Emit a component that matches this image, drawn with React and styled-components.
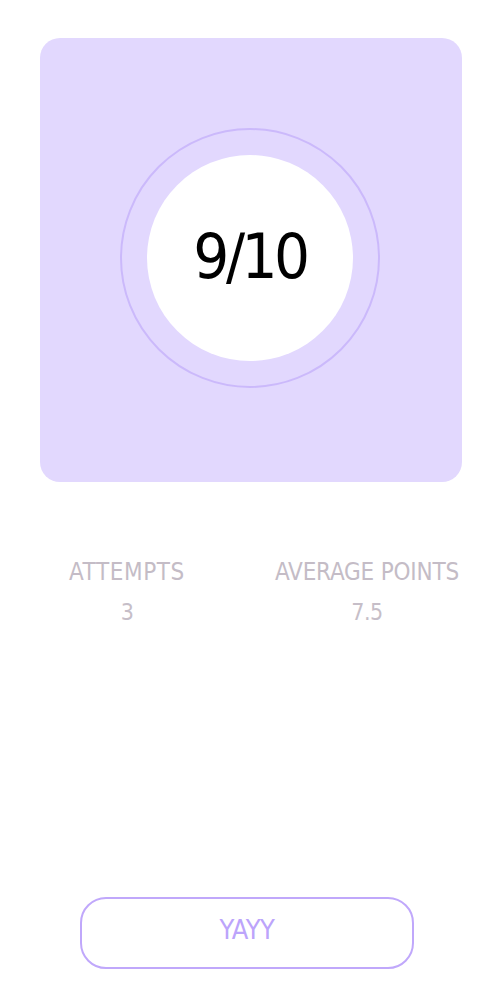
import styled, { createGlobalStyle } from "styled-components";

const GlobalStyle = createGlobalStyle`
  body {
    margin: 0;
    background: #fff;
    font-family: "DejaVu Sans Condensed", "Roboto Condensed", "Roboto", sans-serif;
  }
`;

const Page = styled.div`
  width: 504px;
  min-height: 998px;
  padding: 38px 40px 0;
  box-sizing: border-box;
`;

const Card = styled.div`
  width: 422px;
  height: 444px;
  border-radius: 20px;
  background: #e2d8fe;
  display: flex;
  align-items: center;
  justify-content: center;
`;

const Ring = styled.div`
  width: 260px;
  height: 260px;
  margin: -4px 0 0 -2px;
  border-radius: 50%;
  border: 2px solid #cbb9fb;
  box-sizing: border-box;
  display: flex;
  align-items: center;
  justify-content: center;
`;

const Score = styled.div`
  width: 206px;
  height: 206px;
  padding-bottom: 4px;
  box-sizing: border-box;
  border-radius: 50%;
  background: #fff;
  display: flex;
  align-items: center;
  justify-content: center;
  font-size: 63px;
  letter-spacing: -3.5px;
  color: #000;
`;

const Stats = styled.div`
  display: grid;
  grid-template-columns: 240px 240px;
  margin: 76px 0 0 -33px;
`;

const Stat = styled.div`
  display: flex;
  flex-direction: column;
  align-items: center;
`;

const Label = styled.div`
  font-size: 24px;
  line-height: 28px;
  letter-spacing: ${(props) => (props.tight ? "-0.2px" : "0.6px")};
  color: #c4bcc6;
`;

const Value = styled.div`
  margin-top: 12px;
  font-size: 23px;
  line-height: 28px;
  letter-spacing: -0.5px;
  color: #c6bec8;
`;

const Button = styled.button`
  display: block;
  margin: 271px 0 0 40px;
  width: 334px;
  height: 72px;
  padding: 0 0 8px;
  border: 2px solid #c0a8fb;
  border-radius: 26px;
  background: #fff;
  color: #bca4fb;
  font-family: inherit;
  font-size: 27px;
  letter-spacing: -0.5px;
  cursor: pointer;
`;

export default function App() {
  return (
    <>
      <GlobalStyle />
      <Page>
        <Card>
          <Ring>
            <Score>9/10</Score>
          </Ring>
        </Card>
        <Stats>
          <Stat>
            <Label>ATTEMPTS</Label>
            <Value>3</Value>
          </Stat>
          <Stat>
            <Label tight>AVERAGE POINTS</Label>
            <Value>7.5</Value>
          </Stat>
        </Stats>
        <Button>YAYY</Button>
      </Page>
    </>
  );
}
